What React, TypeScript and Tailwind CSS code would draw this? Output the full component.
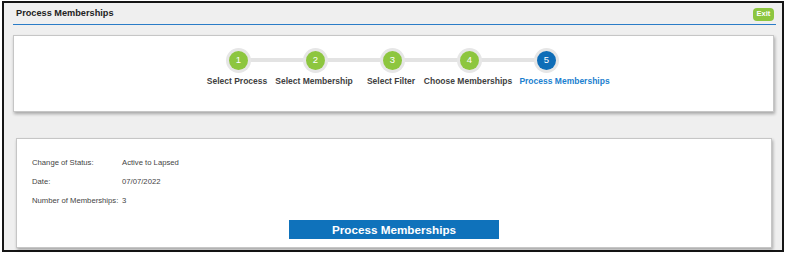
import React from "react";

const steps = [
  { n: 1, label: "Select Process" },
  { n: 2, label: "Select Membership" },
  { n: 3, label: "Select Filter" },
  { n: 4, label: "Choose Memberships" },
  { n: 5, label: "Process Memberships", active: true },
];

const rows = [
  { k: "Change of Status:", v: "Active to Lapsed" },
  { k: "Date:", v: "07/07/2022" },
  { k: "Number of Memberships:", v: "3" },
];

export default function App() {
  return (
    <div
      className="w-[788px] h-[255px] bg-white pt-[1px] pl-[2px]"
      style={{ fontFamily: '"Liberation Sans", Arial, sans-serif' }}
    >
      <div className="w-[782px] h-[251px] border-2 border-[#151515] bg-[#efefef] flex flex-col">
        {/* Header */}
        <div className="ml-[9px] mr-[6px] h-[22px] border-b border-[#2a7cc7] flex items-center justify-between">
          <div className="pl-[3px] pt-[1px] text-[9.2px] font-bold text-[#222]">Process Memberships</div>
          <div className="w-[21px] h-[13px] mt-[1px] mr-[2px] rounded-[4px] bg-[#8dc63f] text-white text-[7.5px] font-bold flex items-center justify-center">
            Exit
          </div>
        </div>

        {/* Steps panel */}
        <div className="mt-[10px] ml-[9px] w-[761px] h-[77px] bg-white border border-[#c6c6c6] shadow-[1px_2px_3px_rgba(0,0,0,0.3)] pl-[186px] pt-[12px]">
          <div className="relative flex w-[385px]">
            <div className="absolute top-[10px] left-[38px] right-[38px] h-[4px] bg-[#e3e3e3]" />
            {steps.map((s) => (
              <div key={s.n} className="relative w-[77px] flex flex-col items-center">
                <div className="w-[25px] h-[25px] rounded-full bg-[#e6e6e6] p-[3px]">
                  <div
                    className={
                      "w-full h-full rounded-full text-white text-[9.5px] flex items-center justify-center " +
                      (s.active ? "bg-[#0f6db7]" : "bg-[#8dc63f]")
                    }
                  >
                    {s.n}
                  </div>
                </div>
                <div
                  className={
                    "mt-[3px] whitespace-nowrap text-[8.5px] font-bold leading-[10px] " +
                    (s.active ? "text-[#1b7fcf] ml-[36px]" : "text-[#3f3f3f] mr-[3px]")
                  }
                >
                  {s.label}
                </div>
              </div>
            ))}
          </div>
        </div>

        {/* Details panel */}
        <div className="mt-[26px] ml-[12px] w-[756px] h-[110px] bg-white border border-[#c6c6c6] shadow-[1px_2px_3px_rgba(0,0,0,0.3)] pt-[14px] pl-[15px] flex flex-col">
          {rows.map((r) => (
            <div key={r.k} className="h-[19px] flex items-center text-[7.7px] text-[#444]">
              <div className="w-[90px] whitespace-nowrap">{r.k}</div>
              <div>{r.v}</div>
            </div>
          ))}
          <div className="mt-[10px] flex justify-center pr-[15px]">
            <div className="w-[210px] h-[19px] bg-[#0f72bb] text-white text-[11.7px] font-bold flex items-center justify-center">
              Process Memberships
            </div>
          </div>
        </div>
      </div>
    </div>
  );
}
